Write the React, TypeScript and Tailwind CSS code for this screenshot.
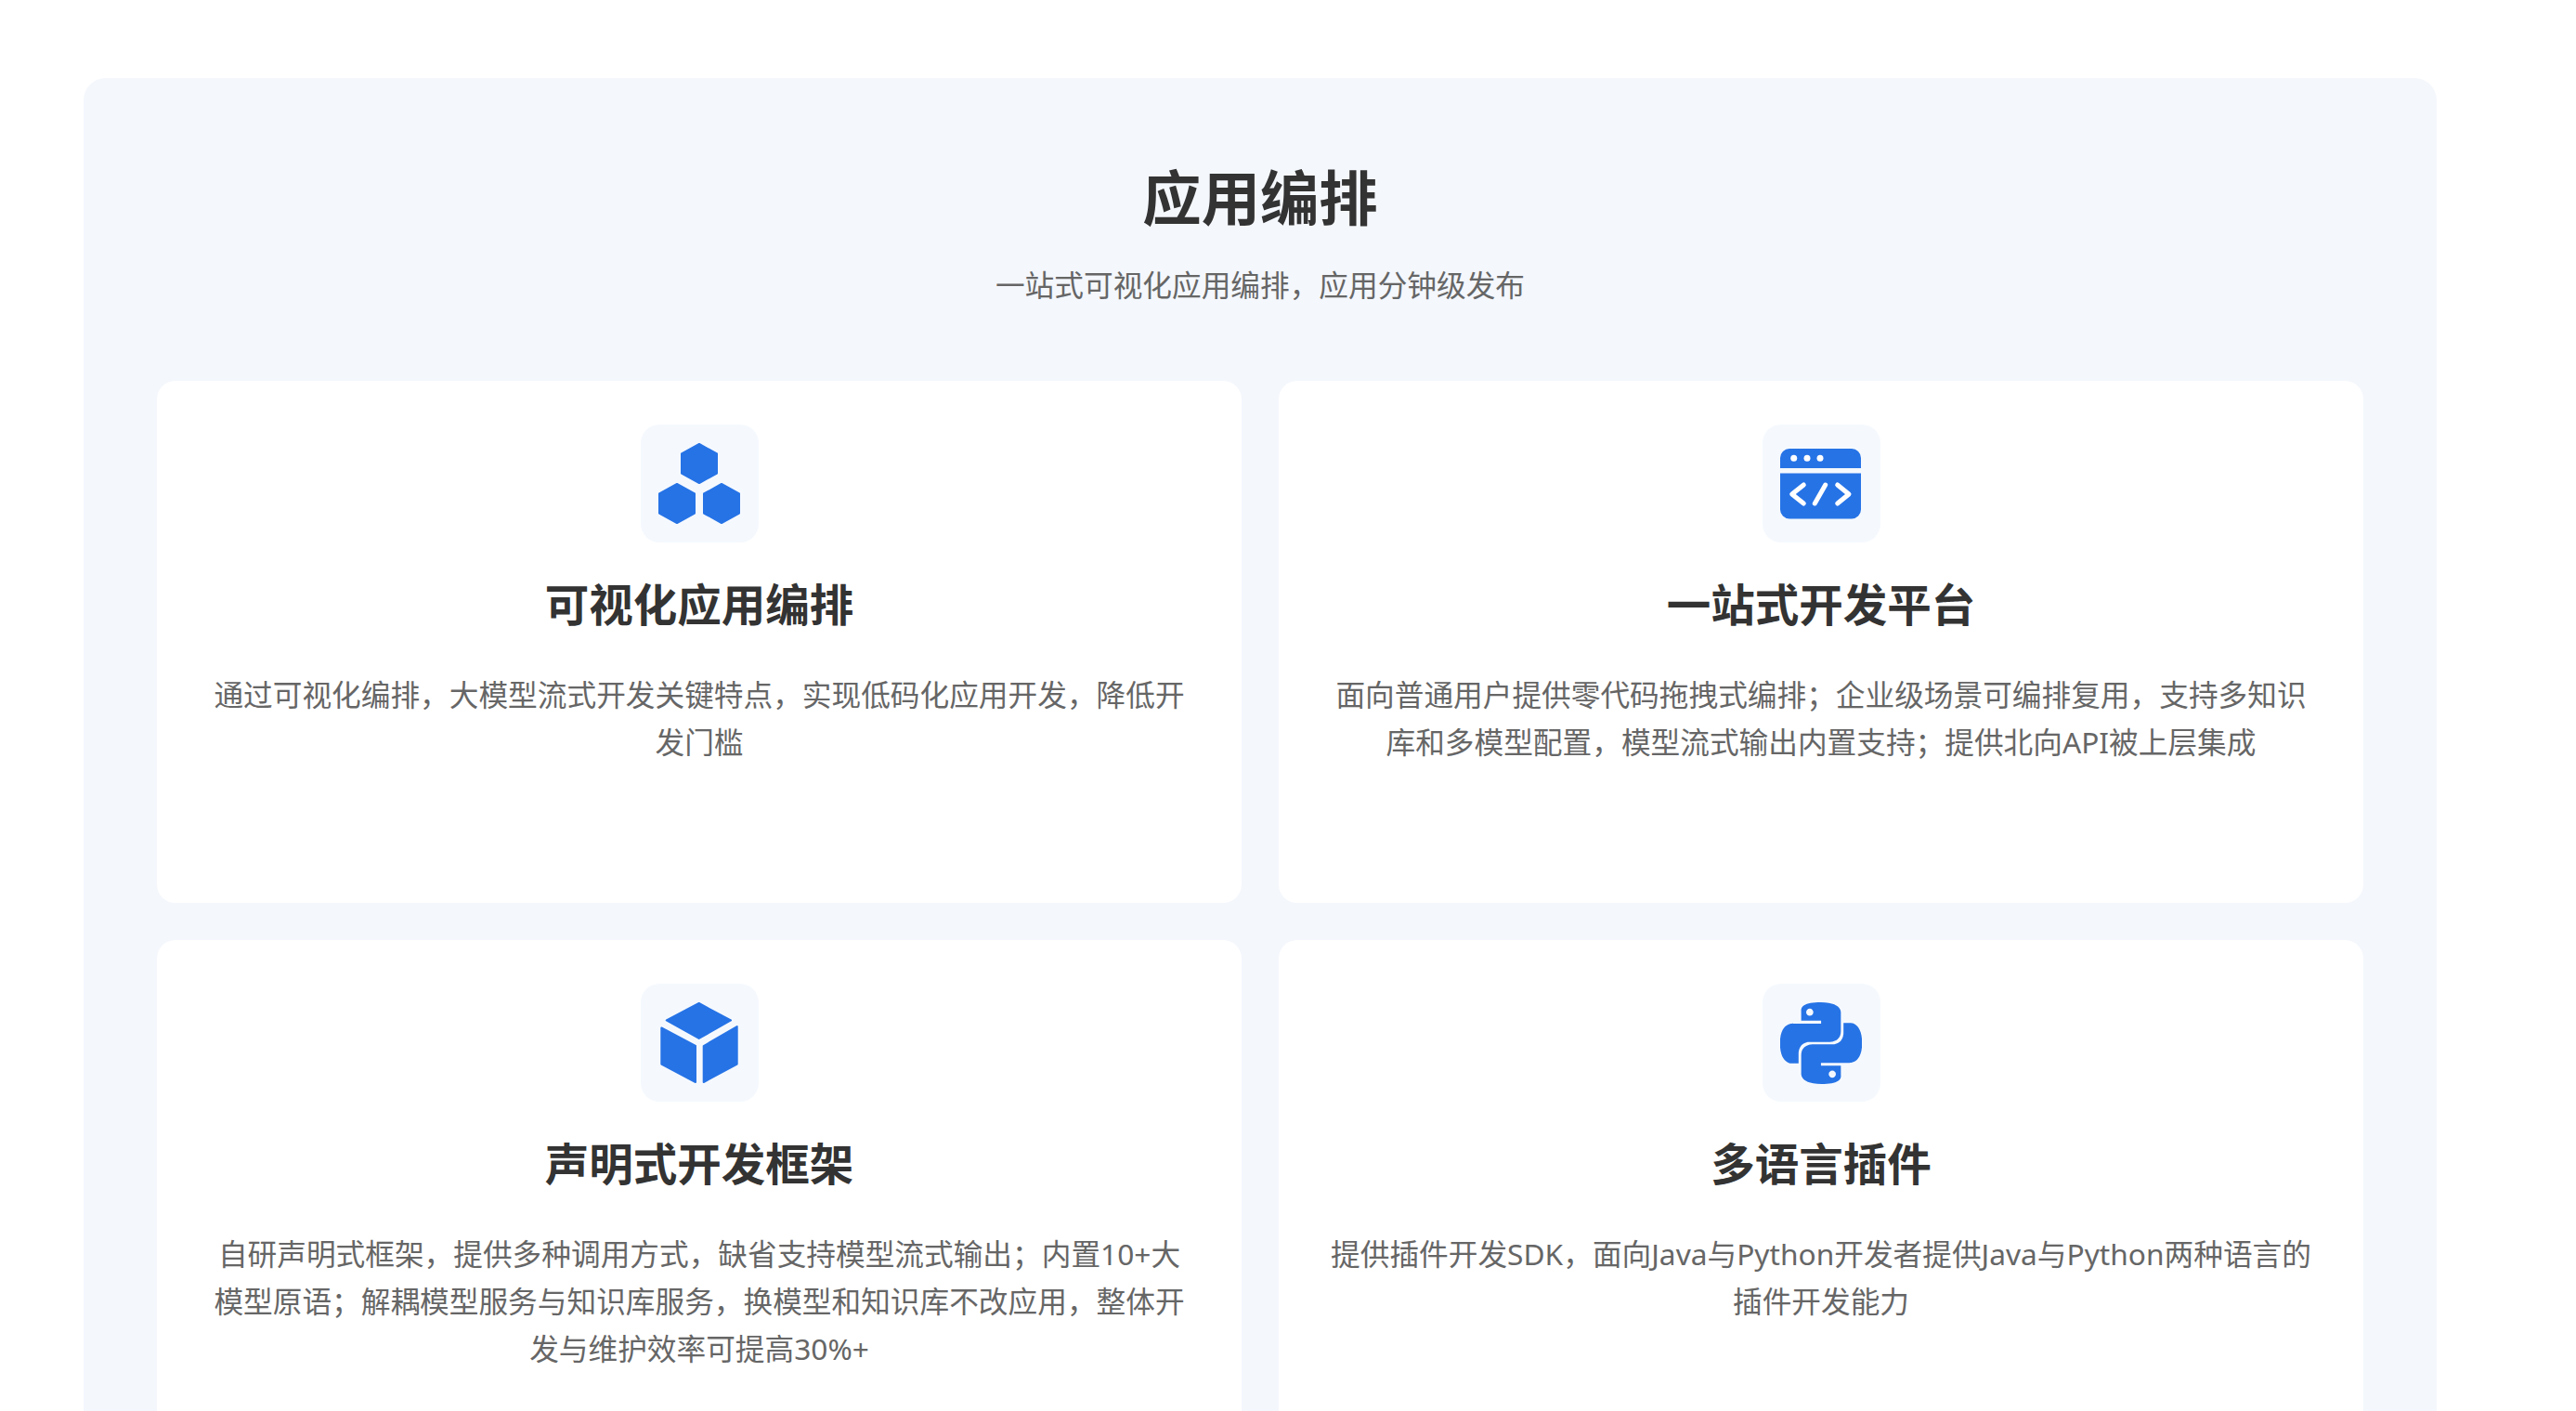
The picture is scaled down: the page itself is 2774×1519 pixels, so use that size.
import { SiPython } from "react-icons/si";
import type { ReactNode } from "react";

const BLUE = "#2673e6";

function HexIcon() {
  const hex = (cx: number, cy: number) => {
    const w = 19;
    const h = 21;
    return `${cx},${cy - h} ${cx + w},${cy - h / 2} ${cx + w},${cy + h / 2} ${cx},${cy + h} ${cx - w},${cy + h / 2} ${cx - w},${cy - h / 2}`;
  };
  return (
    <svg width="88" height="88" viewBox="0 0 88 88" fill={BLUE} stroke={BLUE} strokeWidth="2" strokeLinejoin="round">
      <polygon points={hex(44, 22)} />
      <polygon points={hex(20, 65)} />
      <polygon points={hex(68, 65)} />
    </svg>
  );
}

function CodeIcon() {
  return (
    <svg width="88" height="88" viewBox="0 0 88 88" fill="none">
      <path d="M0 27V16A10 10 0 0 1 10 6H77A10 10 0 0 1 87 16V27Z" fill={BLUE} />
      <path d="M0 32.5H87V71.5A10 10 0 0 1 77 81.5H10A10 10 0 0 1 0 71.5Z" fill={BLUE} />
      <circle cx="14.7" cy="16.3" r="3.5" fill="#fff" />
      <circle cx="29" cy="16.3" r="3.5" fill="#fff" />
      <circle cx="43" cy="16.3" r="3.5" fill="#fff" />
      <path
        d="M25.3 45L12.7 55L25.3 65M48.7 45L37.3 65M61.7 45L74 55L61.7 65"
        stroke="#fff"
        strokeWidth="5"
        strokeLinecap="round"
        strokeLinejoin="round"
      />
    </svg>
  );
}

function CubeIcon() {
  return (
    <svg width="88" height="88" viewBox="0 0 88 88" fill={BLUE} stroke={BLUE} strokeWidth="2" strokeLinejoin="round">
      <polygon points="43.7,1 78,19.5 43.7,39 8.7,19.5" />
      <polygon points="3.3,27.5 40,47 40,86 3.3,66.5" />
      <polygon points="84.7,26 48.7,47 48.7,86 84.7,66.5" />
    </svg>
  );
}

type Feature = {
  icon: ReactNode;
  title: string;
  lines: string[];
};

const features: Feature[] = [
  {
    icon: <HexIcon />,
    title: "可视化应用编排",
    lines: ["通过可视化编排，大模型流式开发关键特点，实现低码化应用开发，降低开", "发门槛"],
  },
  {
    icon: <CodeIcon />,
    title: "一站式开发平台",
    lines: [
      "面向普通用户提供零代码拖拽式编排；企业级场景可编排复用，支持多知识",
      "库和多模型配置，模型流式输出内置支持；提供北向API被上层集成",
    ],
  },
  {
    icon: <CubeIcon />,
    title: "声明式开发框架",
    lines: [
      "自研声明式框架，提供多种调用方式，缺省支持模型流式输出；内置10+大",
      "模型原语；解耦模型服务与知识库服务，换模型和知识库不改应用，整体开",
      "发与维护效率可提高30%+",
    ],
  },
  {
    icon: <SiPython size={88} color={BLUE} />,
    title: "多语言插件",
    lines: ["提供插件开发SDK，面向Java与Python开发者提供Java与Python两种语言的", "插件开发能力"],
  },
];

export default function App() {
  return (
    <div className="h-screen overflow-hidden bg-white font-['Noto_Sans','Noto_Sans_CJK_SC',sans-serif]">
      <section className="ml-[90px] mt-[84px] w-[2534px] rounded-[24px] bg-[#f4f7fc] px-[79px] pt-[84px] pb-[80px]">
        <h2 className="text-center text-[63.36px] leading-[90px] font-bold text-[#333]">应用编排</h2>
        <p className="mt-[23px] text-center text-[31.68px] leading-[51px] text-[#666]">
          一站式可视化应用编排，应用分钟级发布
        </p>
        <div className="mt-[78px] grid grid-cols-2 gap-[40px]">
          {features.map((f) => (
            <div key={f.title} className="h-[562px] rounded-[20px] bg-white px-[46px] pt-[47px] text-center">
              <div className="mx-auto flex h-[127px] w-[127px] items-center justify-center rounded-[20px] bg-[#f5f9fe]">
                {f.icon}
              </div>
              <h3 className="mt-[33px] text-[47.52px] leading-[67px] font-bold text-[#333]">{f.title}</h3>
              <p className="mt-[38px] text-[31.68px] leading-[51px] text-[#666]">
                {f.lines.map((line) => (
                  <span key={line} className="block whitespace-nowrap">
                    {line}
                  </span>
                ))}
              </p>
            </div>
          ))}
        </div>
      </section>
    </div>
  );
}
